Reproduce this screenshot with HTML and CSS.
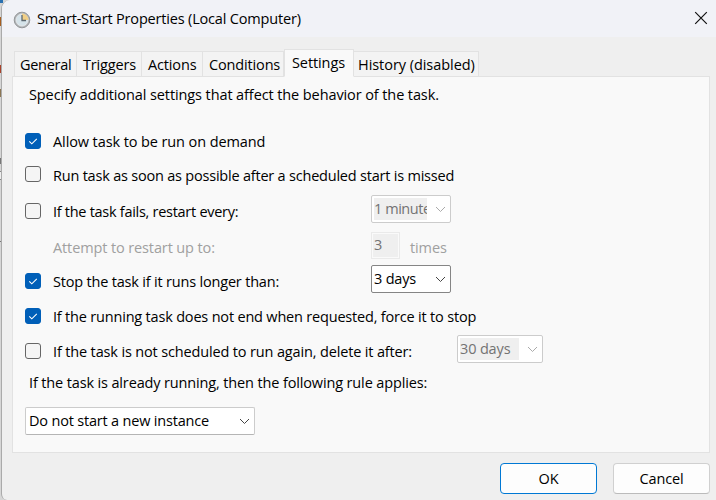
FILE: index.html
```html
<!DOCTYPE html>
<html lang="en">
<head>
<meta charset="utf-8">
<title>Smart-Start Properties</title>
<link rel="stylesheet" href="styles.css">
</head>
<body>
<div class="backdrop">
  <span class="scrap scrap-blue"></span><span class="scrap scrap-brown"></span><span class="scrap scrap-red"></span><span class="scrap scrap-olive"></span><span class="scrap scrap-dark"></span><span class="scrap scrap-box"></span><span class="scrap scrap-line"></span>
</div>
<main class="window">
  <header class="titlebar">
    <svg class="clock" width="18" height="18" viewBox="0 0 18 18"><circle cx="9" cy="9" r="7.8" fill="#b0b3b6" stroke="#94979a" stroke-width="1"/><circle cx="9" cy="9" r="6" fill="#d5e3ea" stroke="#e8ebed" stroke-width=".8"/><path d="M9 9V2.6A6.4 6.4 0 0 1 15.4 9z" fill="#f1cf86"/><path d="M9 4v5.5h4" fill="none" stroke="#5d6870" stroke-width="1.3"/></svg>
    <h1 class="title">Smart-Start Properties (Local Computer)</h1>
    <svg class="close" width="14" height="14" viewBox="0 0 14 14"><path d="M1.2 1.2l11.6 11.6M12.8 1.2L1.2 12.8" stroke="#111" stroke-width="1.2"/></svg>
  </header>
  <nav class="tabs">
    <div class="tab general"><span>General</span></div>
    <div class="tab triggers"><span>Triggers</span></div>
    <div class="tab actions"><span>Actions</span></div>
    <div class="tab conditions"><span>Conditions</span></div>
    <div class="tab settings active"><span>Settings</span></div>
    <div class="tab history"><span>History (disabled)</span></div>
  </nav>
  <section class="panel">
    <p class="intro">Specify additional settings that affect the behavior of the task.</p>
    <div class="row allow"><i class="check on"><svg viewBox="0 0 16 16"><path d="M4.3 8.3l2.5 2.5 5-5"/></svg></i><span class="label">Allow task to be run on demand</span></div>
    <div class="row missed"><i class="check"></i><span class="label">Run task as soon as possible after a scheduled start is missed</span></div>
    <div class="row fails"><i class="check"></i><span class="label">If the task fails, restart every:</span><div class="combo disabled"><span class="value">1 minute</span><svg class="arrow" viewBox="0 0 11 7"><path d="M1 1l4.5 4.5L10 1"/></svg></div></div>
    <div class="row attempt"><i class="blank"></i><span class="label">Attempt to restart up to:</span><div class="number">3</div><span class="times">times</span></div>
    <div class="row longer"><i class="check on"><svg viewBox="0 0 16 16"><path d="M4.3 8.3l2.5 2.5 5-5"/></svg></i><span class="label">Stop the task if it runs longer than:</span><div class="combo strong"><span class="value">3 days</span><svg class="arrow" viewBox="0 0 11 7"><path d="M1 1l4.5 4.5L10 1"/></svg></div></div>
    <div class="row force"><i class="check on"><svg viewBox="0 0 16 16"><path d="M4.3 8.3l2.5 2.5 5-5"/></svg></i><span class="label">If the running task does not end when requested, force it to stop</span></div>
    <div class="row delete"><i class="check"></i><span class="label">If the task is not scheduled to run again, delete it after:</span><div class="combo disabled"><span class="value">30 days</span><svg class="arrow" viewBox="0 0 11 7"><path d="M1 1l4.5 4.5L10 1"/></svg></div></div>
    <p class="rule">If the task is already running, then the following rule applies:</p>
    <div class="combo policy"><span class="value">Do not start a new instance</span><svg class="arrow" viewBox="0 0 11 7"><path d="M1 1l4.5 4.5L10 1"/></svg></div>
  </section>
  <footer class="actions-bar">
    <div class="button primary"><span>OK</span></div>
    <div class="button"><span>Cancel</span></div>
  </footer>
</main>
</body>
</html>
```
FILE: styles.css
```css
* { box-sizing: border-box; }
body { margin: 0; width: 716px; height: 500px; display: flex; overflow: hidden; background: #d6d6d6; color: #000; font: 14.5px/20px "Open Sans", "Noto Sans", sans-serif; white-space: nowrap; }
h1, p { margin: 0; font: inherit; }
.backdrop { width: 1px; flex: none; position: relative; }
.scrap { position: absolute; left: 0; width: 3px; }
.scrap-blue { top: 0; height: 3px; background: #2970b0; }
.scrap-brown { top: 17px; height: 9px; width: 1px; background: #a65e20; }
.scrap-red { top: 65px; height: 8px; width: 1px; background: #a9432b; }
.scrap-olive { top: 89px; height: 8px; width: 1px; background: #8b7653; }
.scrap-dark { top: 158px; height: 6px; background: #777; }
.scrap-box { top: 171px; height: 9px; background: #eee; border: solid #888; border-width: 1px 0; }
.scrap-line { top: 241px; height: 1px; background: #777; }
.window { position: relative; flex: 1; height: 500px; border-left: 1px solid #aaa; border-radius: 9px 0 0 6px; background: #efefef; overflow: hidden; }
.titlebar { height: 37px; background: #f1f2f7; display: flex; align-items: center; padding: 1px 8px 0 11px; }
.clock { flex: none; margin-top: 2px; }
.title { margin-left: 6px; letter-spacing: -.18px; }
.close { margin-left: auto; margin-top: -2px; }
.tabs { height: 40px; padding-left: 12px; display: flex; align-items: flex-end; position: relative; margin-bottom: -1px; z-index: 1; letter-spacing: -.15px; }
.tab { height: 26px; background: #f3f3f3; border: 1px solid #e2e2e2; border-left-width: 0; padding: 3px 0 0 6px; }
.general { width: 63px; border-left-width: 1px; padding-left: 5px; letter-spacing: -.3px; }
.triggers { width: 65px; }
.actions { width: 61px; }
.conditions { width: 81px; }
.settings { width: 70px; border-left-width: 1px; padding-left: 7px; }
.history { width: 125px; padding-left: 4px; letter-spacing: -.05px; }
.tab.active { height: 28px; background: #f9f9f9; border-bottom-color: #f9f9f9; letter-spacing: -.1px; }
.panel { margin-left: 10px; width: 698px; height: 377px; background: #f9f9f9; border: 1px solid #e2e2e2; }
.intro { padding: 8px 0 0 16px; height: 47px; letter-spacing: -.1px; }
.row { display: flex; align-items: center; padding-left: 12px; }
.check, .blank { width: 16px; height: 16px; flex: none; margin-right: 12px; }
.check { border: 1px solid #666; border-radius: 3px; background: #f5f5f5; }
.check.on { background: #005fb8; border-color: #005fb8; }
.check svg { display: block; margin: -1px; width: 16px; height: 16px; fill: none; stroke: #fff; stroke-width: 1.1; }
.label { margin-top: 2px; }
.allow { height: 34px; letter-spacing: -.1px; }
.missed { height: 32px; letter-spacing: -.21px; }
.missed .label { margin-top: 4px; }
.fails { height: 42px; letter-spacing: -.28px; }
.attempt { height: 30px; color: #a0a0a0; letter-spacing: -.12px; }
.longer { height: 38px; letter-spacing: -.19px; }
.force { height: 32px; letter-spacing: -.19px; }
.delete { height: 38px; letter-spacing: -.15px; }
.fails .label, .attempt .label, .longer .label { width: 318px; }
.delete .label { width: 404px; }
.combo { width: 80px; height: 28px; border: 1px solid #ccc; border-radius: 2px; background: #fff; display: flex; align-items: center; justify-content: space-between; padding: 0 4px 0 2px; }
.row .combo { margin-top: -4px; }
.strong { border-color: #858585; }
.disabled { color: #737373; }
.disabled .value { background: #efefef; width: 53px; height: 22px; line-height: 22px; overflow: hidden; }
.fails .value { letter-spacing: -.45px; }
.delete .combo { width: 86px; }
.delete .value { width: 59px; }
.arrow { width: 11px; height: 7px; flex: none; fill: none; stroke: #444; stroke-width: 1; }
.disabled .arrow { stroke: #aaa; }
.number { width: 29px; height: 27px; margin-top: -4px; padding: 2px 0 0 2px; border: 1px solid #eaeaea; background: #efefef; box-shadow: inset 0 0 0 1px #fafafa; color: #737373; }
.times { margin: 2px 0 0 10px; }
.rule { height: 37px; padding: 3px 0 0 16px; letter-spacing: -.14px; }
.policy { width: 230px; margin-left: 12px; border-bottom-color: #b5b5b5; padding-left: 3px; letter-spacing: -.19px; }
.actions-bar { display: flex; justify-content: flex-end; gap: 16px; padding: 10px 6px 0 0; }
.button { width: 97px; height: 31px; display: flex; align-items: center; justify-content: center; background: #fdfdfd; border: 1px solid #d0d0d0; border-bottom-color: #bbb; border-radius: 4px; letter-spacing: -.15px; }
.primary { border-color: #0078d4; }
```
